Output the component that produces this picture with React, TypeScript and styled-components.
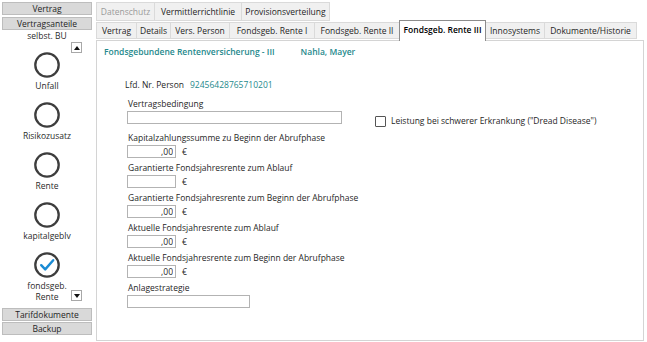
import React from 'react';
import styled, { createGlobalStyle } from 'styled-components';

const GlobalStyle = createGlobalStyle`
  html, body {
    margin: 0;
    padding: 0;
    background: #ffffff;
  }
  body {
    font-family: 'Open Sans', 'Noto Sans', sans-serif;
    font-size: 8.5px;
    color: #1f1f1f;
  }
`;

const Screen = styled.div`
  display: flex;
  width: 647px;
  height: 342px;
  overflow: hidden;
`;

const Sidebar = styled.div`
  width: 94px;
  flex-shrink: 0;
  box-sizing: border-box;
  padding: 2px 2px 0 2px;
  display: flex;
  flex-direction: column;
`;

const NavButton = styled.div<{ $gap?: number }>`
  height: 13px;
  box-sizing: border-box;
  margin-bottom: ${(p) => p.$gap ?? 0}px;
  background: #d9d9d9;
  border: 1px solid #bdbdbd;
  text-align: center;
  line-height: 11px;
  color: #1f1f1f;
`;

const ScrollArea = styled.div`
  position: relative;
  height: 277px;
  overflow: hidden;
  margin-bottom: 1px;
`;

const ItemList = styled.div`
  margin-top: -28px;
  display: flex;
  flex-direction: column;
`;

const Item = styled.div`
  height: 50px;
  display: flex;
  flex-direction: column;
  align-items: center;
  svg {
    margin-bottom: 2px;
  }
`;

const ItemLabel = styled.div`
  line-height: 11px;
  text-align: center;
  color: #2a2a2a;
`;

const ScrollButton = styled.div<{ $top: number }>`
  position: absolute;
  left: 69px;
  top: ${(p) => p.$top}px;
  width: 11px;
  height: 11px;
  box-sizing: border-box;
  background: #fff;
  border: 1px solid #a8a8a8;
  display: flex;
  align-items: center;
  justify-content: center;
`;

const Main = styled.div`
  flex: 1;
  padding-top: 2px;
  padding-left: 2px;
  padding-right: 3px;
  display: flex;
  flex-direction: column;
`;

const TabRow = styled.div<{ $h: number }>`
  display: flex;
  height: ${(p) => p.$h}px;
  align-items: flex-end;
  margin-bottom: 1px;
`;

const Tab = styled.div<{ $w: number; $active?: boolean; $disabled?: boolean }>`
  width: ${(p) => p.$w}px;
  height: ${(p) => (p.$active ? 'calc(100% + 4px)' : '100%')};
  margin-top: ${(p) => (p.$active ? '-2px' : '0')};
  margin-bottom: ${(p) => (p.$active ? '-2px' : '0')};
  box-sizing: border-box;
  background: ${(p) => (p.$active ? '#ffffff' : '#f0f0f0')};
  border: 1px solid ${(p) => (p.$active ? '#8c8c8c' : '#dadada')};
  border-bottom: ${(p) => (p.$active ? 'none' : '1px solid #dadada')};
  margin-left: -1px;
  position: relative;
  z-index: ${(p) => (p.$active ? 2 : 0)};
  display: flex;
  align-items: ${(p) => (p.$active ? 'flex-start' : 'center')};
  padding-top: ${(p) => (p.$active ? '3px' : '0')};
  justify-content: center;
  white-space: nowrap;
  font-weight: ${(p) => (p.$active ? 600 : 400)};
  color: ${(p) => (p.$disabled ? '#9a9a9a' : p.$active ? '#000' : '#1f1f1f')};
  &:first-child {
    margin-left: 0;
  }
`;

const Panel = styled.div`
  flex: 1;
  margin-bottom: 1px;
  border: 1px solid #d4d4d4;
  background: #ffffff;
  padding: 5px 7px;
  display: flex;
  flex-direction: column;
  position: relative;
  z-index: 1;
`;

const Header = styled.div`
  display: flex;
  line-height: 12px;
  font-weight: 600;
  color: #25898c;
`;

const Name = styled.span`
  margin-left: 26px;
`;

const PersonRow = styled.div`
  margin-top: 21px;
  margin-left: 21px;
  line-height: 12px;
  display: flex;
  gap: 6px;
`;

const PersonNumber = styled.span`
  color: #25898c;
`;

const Form = styled.div`
  margin-left: 23px;
  margin-top: 7px;
  display: flex;
  flex-direction: column;
`;

const TopRow = styled.div`
  display: flex;
  align-items: flex-end;
  margin-bottom: 8px;
`;

const Field = styled.div<{ $gap?: number }>`
  display: flex;
  flex-direction: column;
  margin-bottom: ${(p) => p.$gap ?? 4}px;
`;

const Label = styled.div`
  line-height: 12px;
  padding-left: 1px;
  margin-bottom: 1px;
`;

const Input = styled.input<{ $w: number }>`
  width: ${(p) => p.$w}px;
  height: 13px;
  box-sizing: border-box;
  border: 1px solid #b3b3b3;
  padding: 0 2px;
  margin: 0;
  font: inherit;
  color: #1f1f1f;
  text-align: right;
  background: #fff;
  outline: none;
`;

const AmountRow = styled.div`
  display: flex;
  align-items: center;
  gap: 6px;
  line-height: 13px;
`;

const CheckRow = styled.div`
  display: flex;
  align-items: center;
  gap: 5px;
  margin-left: 33px;
  margin-bottom: -3px;
  line-height: 12px;
`;

const CheckBox = styled.span`
  width: 11px;
  height: 11px;
  box-sizing: border-box;
  border: 1px solid #555;
  border-radius: 1px;
  background: #fff;
`;

const RingIcon = ({ checked }: { checked?: boolean }) => (
  <svg width="26" height="26" viewBox="0 0 26 26">
    <circle cx="13" cy="13" r="11.7" fill="none" stroke="#3d3d3d" strokeWidth="2.3" />
    {checked && (
      <path d="M7.2 13.2 L11.2 17.4 L19.2 8.2" fill="none" stroke="#1a8bd4" strokeWidth="2.4" strokeLinecap="round" strokeLinejoin="round" />
    )}
  </svg>
);

const Arrow = ({ up }: { up?: boolean }) => (
  <svg width="6" height="4" viewBox="0 0 6 4">
    <path d={up ? 'M0 4 L3 0 L6 4 Z' : 'M0 0 L3 4 L6 0 Z'} fill="#111" />
  </svg>
);

const sideItems = [
  { label: ['selbst. BU'] },
  { label: ['Unfall'] },
  { label: ['Risikozusatz'] },
  { label: ['Rente'] },
  { label: ['kapitalgeblv'] },
  { label: ['fondsgeb.', 'Rente'], checked: true },
];

const topTabs = [
  { text: 'Datenschutz', w: 59, disabled: true },
  { text: 'Vermittlerrichtlinie', w: 88 },
  { text: 'Provisionsverteilung', w: 89 },
];

const mainTabs = [
  { text: 'Vertrag', w: 41 },
  { text: 'Details', w: 35 },
  { text: 'Vers. Person', w: 60 },
  { text: 'Fondsgeb. Rente I', w: 86 },
  { text: 'Fondsgeb. Rente II', w: 86 },
  { text: 'Fondsgeb. Rente III', w: 87, active: true },
  { text: 'Innosystems', w: 60 },
  { text: 'Dokumente/Historie', w: 93 },
];

const amounts = [
  { label: 'Kapitalzahlungssumme zu Beginn der Abrufphase', value: ',00' },
  { label: 'Garantierte Fondsjahresrente zum Ablauf', value: '' },
  { label: 'Garantierte Fondsjahresrente zum Beginn der Abrufphase', value: ',00' },
  { label: 'Aktuelle Fondsjahresrente zum Ablauf', value: ',00' },
  { label: 'Aktuelle Fondsjahresrente zum Beginn der Abrufphase', value: ',00' },
];

function App() {
  return (
    <>
      <GlobalStyle />
      <Screen>
        <Sidebar>
          <NavButton $gap={2}>Vertrag</NavButton>
          <NavButton>Vertragsanteile</NavButton>
          <ScrollArea>
            <ItemList>
              {sideItems.map((item) => (
                <Item key={item.label.join(' ')}>
                  <RingIcon checked={item.checked} />
                  {item.label.map((line) => (
                    <ItemLabel key={line}>{line}</ItemLabel>
                  ))}
                </Item>
              ))}
            </ItemList>
            <ScrollButton $top={12}>
              <Arrow up />
            </ScrollButton>
            <ScrollButton $top={260}>
              <Arrow />
            </ScrollButton>
          </ScrollArea>
          <NavButton $gap={1}>Tarifdokumente</NavButton>
          <NavButton>Backup</NavButton>
        </Sidebar>
        <Main>
          <TabRow $h={19}>
            {topTabs.map((t) => (
              <Tab key={t.text} $w={t.w} $disabled={t.disabled}>
                {t.text}
              </Tab>
            ))}
          </TabRow>
          <TabRow $h={17}>
            {mainTabs.map((t) => (
              <Tab key={t.text} $w={t.w} $active={t.active}>
                {t.text}
              </Tab>
            ))}
          </TabRow>
          <Panel>
            <Header>
              <span>Fondsgebundene Rentenversicherung - III</span>
              <Name>Nahla, Mayer</Name>
            </Header>
            <PersonRow>
              <span>Lfd. Nr. Person</span>
              <PersonNumber>92456428765710201</PersonNumber>
            </PersonRow>
            <Form>
              <TopRow>
                <Field $gap={0}>
                  <Label>Vertragsbedingung</Label>
                  <Input $w={215} readOnly defaultValue="" />
                </Field>
                <CheckRow>
                  <CheckBox />
                  <span>Leistung bei schwerer Erkrankung ("Dread Disease")</span>
                </CheckRow>
              </TopRow>
              {amounts.map((a) => (
                <Field key={a.label}>
                  <Label>{a.label}</Label>
                  <AmountRow>
                    <Input $w={49} readOnly defaultValue={a.value} />
                    <span>€</span>
                  </AmountRow>
                </Field>
              ))}
              <Field>
                <Label>Anlagestrategie</Label>
                <Input $w={123} readOnly defaultValue="" />
              </Field>
            </Form>
          </Panel>
        </Main>
      </Screen>
    </>
  );
}

export default App;
